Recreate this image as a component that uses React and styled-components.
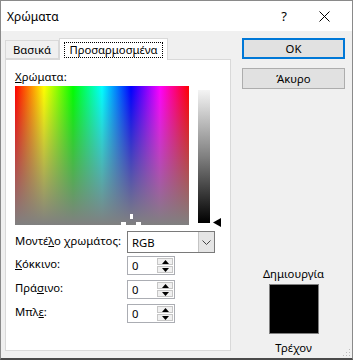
import React from "react";
import styled, { createGlobalStyle } from "styled-components";

const GlobalStyle = createGlobalStyle`
  html, body {
    margin: 0;
    padding: 0;
    background: #f0f0f0;
  }
  body {
    font-family: "Noto Sans", "Liberation Sans", sans-serif;
    font-size: 11.3px;
    color: #000;
  }
`;

function App() {
  return (
    <Window>
      <GlobalStyle />
      <TitleBar>
        <Title>Χρώματα</Title>
        <TitleButton>?</TitleButton>
        <TitleButton>
          <svg width="11" height="11" viewBox="0 0 11 11">
            <path d="M0.5 0.5 L10.5 10.5 M10.5 0.5 L0.5 10.5" stroke="#000" strokeWidth="1" />
          </svg>
        </TitleButton>
      </TitleBar>

      <Body>
        <LeftColumn>
          <Tabs>
            <Tab $width={54}>Βασικά</Tab>
            <Tab $active $width={109}>
              <FocusRing>Προσαρμοσμένα</FocusRing>
            </Tab>
          </Tabs>
          <Panel>
            <Label>
              <u>Χ</u>ρώματα:
            </Label>
            <PickerRow>
              <Spectrum>
                <svg width="22" height="12" viewBox="0 0 22 12">
                  <rect x="9" y="0" width="3" height="5" fill="#fff" />
                  <rect x="0" y="8" width="5" height="3" fill="#fff" />
                  <rect x="15" y="8" width="5" height="3" fill="#fff" />
                </svg>
              </Spectrum>
              <LumBar>
                <svg width="8" height="9" viewBox="0 0 8 9">
                  <polygon points="0,4.5 8,0 8,9" fill="#000" />
                </svg>
              </LumBar>
            </PickerRow>

            <FieldRow $gap={6}>
              <FieldLabel>
                Μοντέ<u>λ</u>ο χρωμάτος:
              </FieldLabel>
              <Select>
                <SelectValue>RGB</SelectValue>
                <SelectButton>
                  <svg width="9" height="5" viewBox="0 0 9 5">
                    <polyline points="0.5,0.5 4.5,4.5 8.5,0.5" fill="none" stroke="#444" strokeWidth="1" />
                  </svg>
                </SelectButton>
              </Select>
            </FieldRow>

            <FieldRow $gap={3}>
              <FieldLabel>
                <u>Κ</u>όκκινο:
              </FieldLabel>
              <Spinner value="0" />
            </FieldRow>
            <FieldRow $gap={5}>
              <FieldLabel>
                Πρά<u>σ</u>ινο:
              </FieldLabel>
              <Spinner value="0" />
            </FieldRow>
            <FieldRow $gap={5}>
              <FieldLabel>
                Μπλ<u>ε</u>:
              </FieldLabel>
              <Spinner value="0" />
            </FieldRow>
          </Panel>
        </LeftColumn>

        <RightColumn>
          <Button $default>OK</Button>
          <Button>Άκυρο</Button>
          <Preview>
            <span>Δημιουργία</span>
            <Swatch />
            <span>Τρέχον</span>
          </Preview>
        </RightColumn>
      </Body>

      <Grip>
        <svg width="10" height="10" viewBox="0 0 10 10">
          <rect x="8" y="2" width="1" height="1" fill="#bcbcbc" />
          <rect x="5" y="5" width="1" height="1" fill="#bcbcbc" />
          <rect x="8" y="5" width="1" height="1" fill="#bcbcbc" />
          <rect x="2" y="8" width="1" height="1" fill="#bcbcbc" />
          <rect x="5" y="8" width="1" height="1" fill="#bcbcbc" />
          <rect x="8" y="8" width="1" height="1" fill="#bcbcbc" />
        </svg>
      </Grip>
    </Window>
  );
}

function Spinner({ value }) {
  return (
    <SpinBox>
      <SpinValue>{value}</SpinValue>
      <SpinButtons>
        <SpinButton>
          <svg width="7" height="4" viewBox="0 0 7 4">
            <polygon points="3.5,0 7,4 0,4" fill="#000" />
          </svg>
        </SpinButton>
        <SpinButton>
          <svg width="7" height="4" viewBox="0 0 7 4">
            <polygon points="0,0 7,0 3.5,4" fill="#000" />
          </svg>
        </SpinButton>
      </SpinButtons>
    </SpinBox>
  );
}

export default App;

const Window = styled.div`
  position: relative;
  width: 353px;
  height: 360px;
  box-sizing: border-box;
  border: 1px solid #8a8a8a;
  border-bottom: 2px solid #4a4a4a;
  background: #f0f0f0;
  display: flex;
  flex-direction: column;
  overflow: hidden;
`;

const TitleBar = styled.div`
  height: 30px;
  flex: none;
  background: #fff;
  display: flex;
  align-items: center;
  padding-left: 6px;
  padding-right: 8px;
`;

const Title = styled.div`
  flex: 1;
  font-size: 12px;
`;

const TitleButton = styled.div`
  width: 40px;
  display: flex;
  justify-content: center;
  align-items: center;
  font-size: 13px;
`;

const Body = styled.div`
  flex: 1;
  display: flex;
  padding: 7px 0 0 4px;
`;

const LeftColumn = styled.div`
  width: 226px;
  display: flex;
  flex-direction: column;
`;

const Tabs = styled.div`
  height: 21px;
  display: flex;
  align-items: flex-end;
  position: relative;
  z-index: 1;
`;

const Tab = styled.div`
  box-sizing: border-box;
  width: ${(p) => p.$width}px;
  height: ${(p) => (p.$active ? "22px" : "19px")};
  margin-bottom: ${(p) => (p.$active ? "-1px" : "0")};
  padding-top: ${(p) => (p.$active ? "3px" : "0")};
  border: 1px solid #d9d9d9;
  border-bottom: ${(p) => (p.$active ? "none" : "1px solid #d9d9d9")};
  background: ${(p) => (p.$active ? "#fff" : "#f0f0f0")};
  display: flex;
  justify-content: center;
  align-items: ${(p) => (p.$active ? "flex-start" : "center")};
  white-space: nowrap;
`;

const FocusRing = styled.div`
  border: 1px dotted #000;
  padding: 0 4px;
  line-height: 14px;
`;

const Panel = styled.div`
  box-sizing: border-box;
  height: 292px;
  border: 1px solid #d9d9d9;
  background: #fff;
  padding: 10px 0 0 9px;
  display: flex;
  flex-direction: column;
`;

const Label = styled.div`
  line-height: 14px;
  height: 15px;
`;

const PickerRow = styled.div`
  display: flex;
  align-items: flex-start;
  margin-top: 1px;
`;

const Spectrum = styled.div`
  position: relative;
  width: 174px;
  height: 139px;
  overflow: hidden;
  background:
    linear-gradient(to bottom, rgba(128, 128, 128, 0), rgb(128, 128, 128)),
    linear-gradient(to right, #ff0000, #ffff00, #00ff00, #00ffff, #0000ff, #ff00ff, #ff0000);

  svg {
    position: absolute;
    left: 106px;
    top: 128px;
  }
`;

const LumBar = styled.div`
  position: relative;
  margin: 4px 0 0 9px;
  width: 12px;
  height: 133px;
  background: linear-gradient(to bottom, #f4f4f4, #808080 50%, #000);

  svg {
    position: absolute;
    left: 15px;
    bottom: -4px;
  }
`;

const FieldRow = styled.div`
  display: flex;
  align-items: center;
  margin-top: ${(p) => p.$gap}px;
`;

const FieldLabel = styled.div`
  width: 112px;
  flex: none;
  margin-top: -3px;
  white-space: nowrap;
  line-height: 16px;
`;

const Select = styled.div`
  box-sizing: border-box;
  width: 88px;
  height: 22px;
  border: 1px solid #7a7a7a;
  display: flex;
  background: #fff;
`;

const SelectValue = styled.div`
  flex: 1;
  padding-left: 4px;
  display: flex;
  align-items: center;
`;

const SelectButton = styled.div`
  width: 15px;
  background: #e5e5e5;
  border-left: 1px solid #c4c4c4;
  display: flex;
  align-items: center;
  justify-content: center;
`;

const SpinBox = styled.div`
  box-sizing: border-box;
  width: 48px;
  height: 19px;
  border: 1px solid #abadb3;
  display: flex;
  background: #fff;
`;

const SpinValue = styled.div`
  flex: 1;
  padding-left: 4px;
  display: flex;
  align-items: center;
`;

const SpinButtons = styled.div`
  width: 16px;
  display: flex;
  flex-direction: column;
  padding: 1px;
  gap: 1px;
`;

const SpinButton = styled.div`
  flex: 1;
  box-sizing: border-box;
  background: #f0f0f0;
  border: 1px solid #c6c6c6;
  display: flex;
  align-items: center;
  justify-content: center;
`;

const RightColumn = styled.div`
  width: 103px;
  margin-left: 11px;
  display: flex;
  flex-direction: column;
  align-items: stretch;
  gap: 9px;
`;

const Button = styled.div`
  box-sizing: border-box;
  height: 21px;
  background: #e1e1e1;
  border: ${(p) => (p.$default ? "2px solid #0078d7" : "1px solid #adadad")};
  display: flex;
  align-items: center;
  justify-content: center;
`;

const Preview = styled.div`
  margin-top: 169px;
  display: flex;
  flex-direction: column;
  align-items: center;
  line-height: 14px;
  gap: 3px;

  span:last-child {
    margin-top: 4px;
  }
`;

const Swatch = styled.div`
  box-sizing: border-box;
  width: 50px;
  height: 50px;
  background: #000;
  border: 1px solid #808080;
`;

const Grip = styled.div`
  position: absolute;
  right: 1px;
  bottom: 1px;
  line-height: 0;
`;
